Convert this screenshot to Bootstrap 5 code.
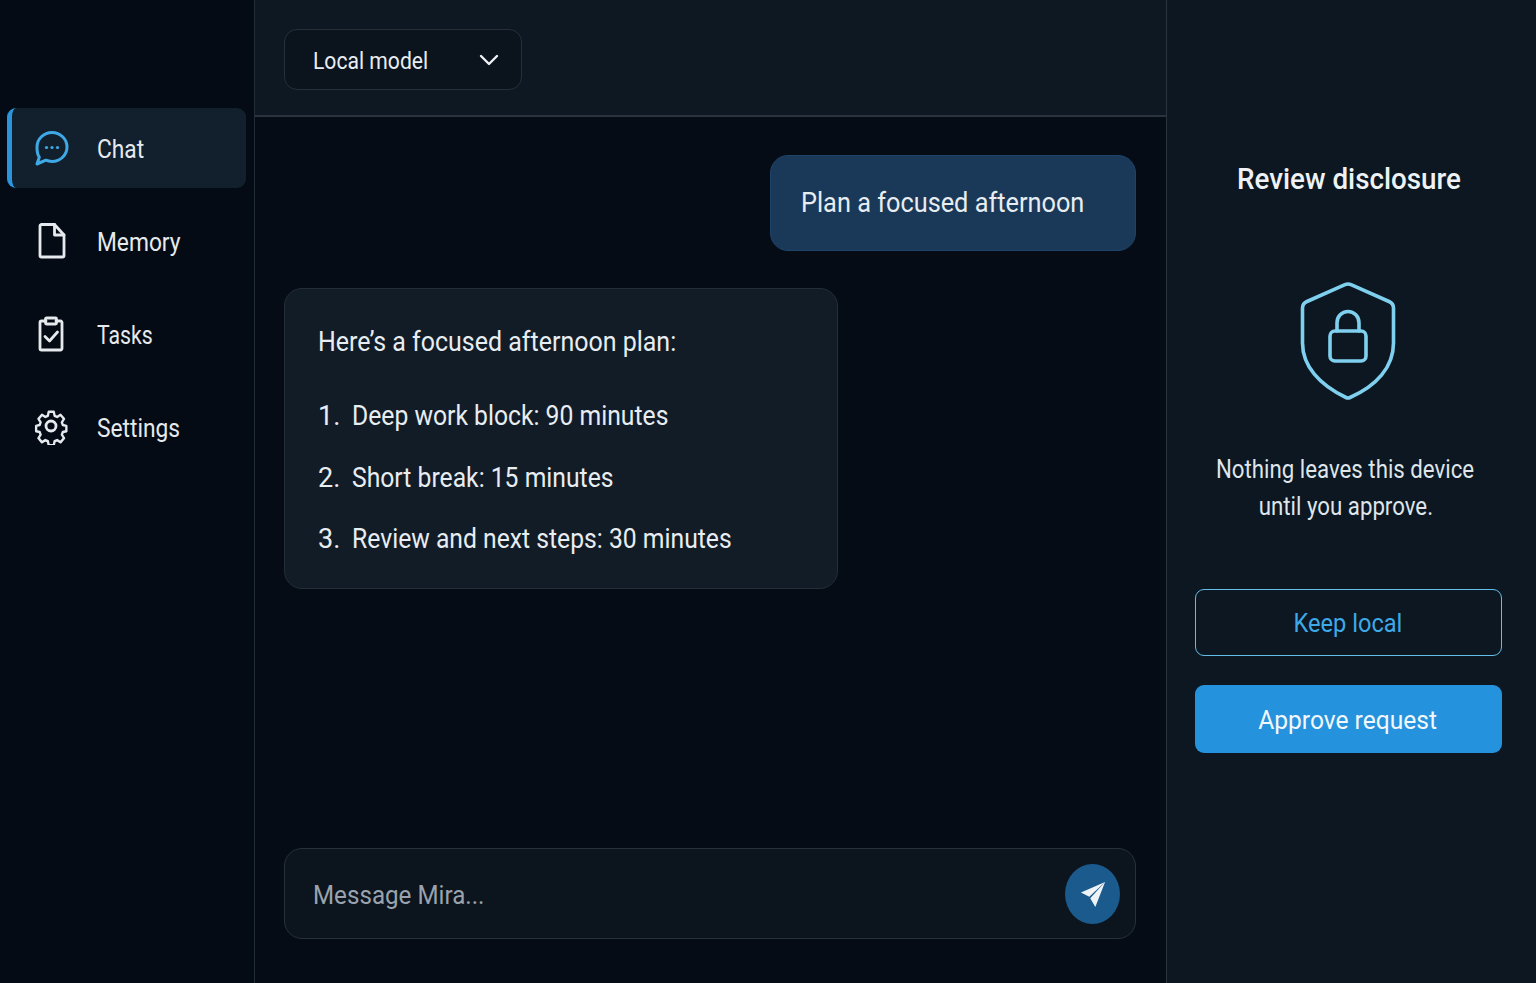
<!DOCTYPE html>
<html lang="en">
<head>
<meta charset="utf-8">
<title>Mira</title>
<link href="https://cdn.jsdelivr.net/npm/bootstrap@5.3.0/dist/css/bootstrap.min.css" rel="stylesheet">
<style>
html,body{height:100%}
body{background:#050b14;color:#e8edf2;font-family:Roboto,"Liberation Sans",sans-serif;overflow:hidden}
.shell{height:983px}
.narrow{display:inline-block;white-space:nowrap;transform:scaleX(.91);transform-origin:left center}
.narrow-mid{display:inline-block;white-space:nowrap;transform-origin:center center}
.side-col{width:255px;flex:none;background:#040b14;border-right:1px solid #232d38;padding:108px 8px 0 7px}
.side-item{height:80px;padding-left:26px;gap:26px;margin-bottom:13px;font-size:25px;color:#e6eaee;border-radius:9px;border-left:5px solid transparent;text-decoration:none}
.side-item .narrow{position:relative;top:2px;margin-left:1px}
.side-item .narrow.tight{transform:scaleX(.85)}
.side-item.is-on{background:#12202e;border-left-color:#2a94dc}
.side-item svg{width:36px;height:36px;flex:none;margin-left:-4px}
.main-col{width:912px;flex:none;background:#050c16;border-right:1px solid #2a343f}
.top-strip{height:117px;background:#0e1823;border-bottom:2px solid #2a343e;padding:29px 0 0 29px}
.model-pick{width:238px;height:61px;background:#0b131d;border:1px solid #26303b;border-radius:13px;color:#e8edf2;font-size:24px;padding:0 22px 0 28px}
.model-pick .narrow{transform:scaleX(.88);position:relative;top:1px}
.model-pick:hover,.model-pick:focus{background:#0b131d;color:#e8edf2;border-color:#26303b}
.thread{padding:38px 30px 0 29px}
.bubble-me{width:366px;height:96px;background:#1a3958;border:1px solid #20436a;border-radius:18px;font-size:28px;padding-left:30px}
.bubble-me .narrow{transform:scaleX(.904)}
.bubble-ai{width:554px;height:301px;margin-top:37px;background:#121c27;border:1px solid #232e39;border-radius:18px;font-size:27px;padding:36px 0 0 33px}
.bubble-ai p{margin:0 0 40px;line-height:34px}
.bubble-ai p .narrow{transform:scaleX(.925)}
.plan-list{list-style:none;margin:0;padding:0}
.plan-list li{display:flex;height:61.5px;line-height:34px}
.plan-list li>span:first-child{width:34px;flex:none}
.plan-list .narrow{transform:scaleX(.915)}
.composer{margin:0 30px 44px 29px;height:91px;background:#0c141e;border:1px solid #27313c;border-radius:18px;padding:0 15px 0 28px;font-size:26px;color:#9aa3ad}
.composer .narrow{transform:scaleX(.93);position:relative;top:2px}
.send-btn{width:55px;height:60px;padding:0;border:0;border-radius:50%;background:#1b5a8c}
.send-btn:hover,.send-btn:focus{background:#1b5a8c}
.review-col{flex:1;background:#0c1721;padding:0 34px 0 28px;text-align:center}
.review-col h2{font-size:30px;font-weight:500;color:#eef2f5;margin:0;padding-top:160px;line-height:37px}
.review-col h2 .narrow-mid{transform:scaleX(.926)}
.shield{display:block;width:98px;height:120px;margin:85px auto 0}
.review-note{font-size:25px;line-height:37px;color:#dfe5ea;margin:49px 0 0 -6px}
.review-note .narrow-mid{transform:scaleX(.89)}
.act-keep,.act-ok{display:block;width:100%;font-size:26px;border-radius:9px;padding:7px 14px 5px 12px}
.act-keep{height:67px;margin-top:64px;background:transparent;border:1px solid #62bde8;color:#3fa9e8}
.act-keep .narrow-mid{transform:scaleX(.908)}
.act-keep:hover,.act-keep:focus{background:transparent;border-color:#62bde8;color:#3fa9e8}
.act-ok{height:68px;margin-top:29px;background:#2492dc;border:0;color:#f2f7fb}
.act-ok .narrow-mid{transform:scaleX(.945)}
.act-ok:hover,.act-ok:focus{background:#2492dc;color:#f2f7fb}
</style>
</head>
<body>
<div class="d-flex shell">
  <nav class="side-col d-flex flex-column">
    <a href="#" class="side-item is-on d-flex align-items-center">
      <svg viewBox="0 0 36 36" fill="none" stroke="#3fa9e6" stroke-width="3" stroke-linejoin="round" stroke-linecap="round"><path d="M18 2.500c8.300 0 15 6.500 15 14.500S26.300 31.500 18 31.500c-2.200 0-4.300-.4-6.200-1.300L3 34l2.300-6.800C3.400 24.700 3 20.800 3 17 3 9 9.700 2.500 18 2.500z"/><circle cx="12.500" cy="17.500" r="1.600" fill="#3fa9e6" stroke="none"/><circle cx="18" cy="17.500" r="1.600" fill="#3fa9e6" stroke="none"/><circle cx="23.500" cy="17.500" r="1.600" fill="#3fa9e6" stroke="none"/></svg>
      <span class="narrow">Chat</span>
    </a>
    <a href="#" class="side-item d-flex align-items-center">
      <svg viewBox="0 0 36 36" fill="none" stroke="#e6eaee" stroke-width="2.800" stroke-linejoin="round" stroke-linecap="round"><path d="M7 1.500h13.500L30 12v20.500a1.500 1.500 0 0 1-1.500 1.500h-21A1.500 1.500 0 0 1 6 32.500V3a1.500 1.500 0 0 1 1-1.500z"/><path d="M20.500 1.500V12H30"/></svg>
      <span class="narrow">Memory</span>
    </a>
    <a href="#" class="side-item d-flex align-items-center">
      <svg viewBox="0 0 36 36" fill="none" stroke="#e6eaee" stroke-width="2.800" stroke-linejoin="round" stroke-linecap="round"><path d="M12 5H7.500A1.500 1.500 0 0 0 6 6.500v26A1.500 1.500 0 0 0 7.500 34h19a1.500 1.500 0 0 0 1.500-1.500v-26A1.500 1.500 0 0 0 26.500 5H22"/><rect x="11.500" y="2" width="11" height="6" rx="1"/><path d="M11 20.500l4.500 4.500 8-9"/></svg>
      <span class="narrow tight">Tasks</span>
    </a>
    <a href="#" class="side-item d-flex align-items-center">
      <svg viewBox="0 0 36 36" fill="none" stroke="#e6eaee" stroke-width="2.800" stroke-linejoin="round"><circle cx="17" cy="17" r="5"/><path d="M15 2h6l1 4.500 3 1.300 4-2.500 4.200 4.700-2.600 3.900 1.200 2.900 4.200 1v6l-4.200 1-1.200 2.900 2.600 3.900-4.200 4.700-4-2.500-3 1.300-1 4.500h-6l-1-4.500-3-1.300-4 2.500-4.200-4.700 2.600-3.900-1.200-2.900-4.200-1v-6l4.200-1 1.200-2.900L2.800 10l4.200-4.700 4 2.500 3-1.300z" transform="translate(2.120 1) scale(.84 .89)"/></svg>
      <span class="narrow">Settings</span>
    </a>
  </nav>

  <main class="main-col d-flex flex-column">
    <div class="top-strip">
      <button type="button" class="btn model-pick d-flex align-items-center justify-content-between">
        <span class="narrow">Local model</span>
        <svg width="20" height="14" viewBox="0 0 20 14" fill="none" stroke="#eef2f5" stroke-width="2.400" stroke-linecap="round" stroke-linejoin="round"><path d="M2 3l8 8 8-8"/></svg>
      </button>
    </div>
    <div class="thread flex-grow-1">
      <div class="d-flex justify-content-end">
        <div class="bubble-me d-flex align-items-center"><span class="narrow">Plan a focused afternoon</span></div>
      </div>
      <div class="bubble-ai">
        <p><span class="narrow">Here’s a focused afternoon plan:</span></p>
        <ol class="plan-list">
          <li><span>1.</span><span class="narrow">Deep work block: 90 minutes</span></li>
          <li><span>2.</span><span class="narrow">Short break: 15 minutes</span></li>
          <li><span>3.</span><span class="narrow">Review and next steps: 30 minutes</span></li>
        </ol>
      </div>
    </div>
    <div class="composer d-flex align-items-center justify-content-between">
      <span class="narrow">Message Mira...</span>
      <button type="button" class="btn send-btn d-flex align-items-center justify-content-center" aria-label="Send">
        <svg width="26" height="28" viewBox="0 0 28 30"><path d="M27 2 1 13.500l9 4.500L27 2zM27 2 11 19.500 16.500 29 27 2z" fill="#eef3f8"/></svg>
      </button>
    </div>
  </main>

  <aside class="review-col">
    <h2><span class="narrow-mid">Review disclosure</span></h2>
    <svg class="shield" viewBox="1 1 98 120" fill="none" stroke="#7fd0ee" stroke-width="3.600" stroke-linejoin="round" stroke-linecap="round"><path d="M49 3c1 0 2 .2 3 .7l38 16.800c3 1.300 4.500 3.500 4.500 6.500v35c0 24-17 43-43.500 54.500-1.500.7-2.500.7-4 0C20.500 104 3.500 85 3.500 62V27c0-3 1.500-5.200 4.500-6.500L46 3.700c1-.5 2-.7 3-.7z"/><rect x="31" y="50" width="36" height="30" rx="5"/><path d="M38 50V42c0-6.500 4.800-11.500 11-11.500S60 35.500 60 42v8"/></svg>
    <p class="review-note"><span class="narrow-mid">Nothing leaves this device</span><br><span class="narrow-mid">until you approve.</span></p>
    <button type="button" class="btn act-keep"><span class="narrow-mid">Keep local</span></button>
    <button type="button" class="btn act-ok"><span class="narrow-mid">Approve request</span></button>
  </aside>
</div>
</body>
</html>
